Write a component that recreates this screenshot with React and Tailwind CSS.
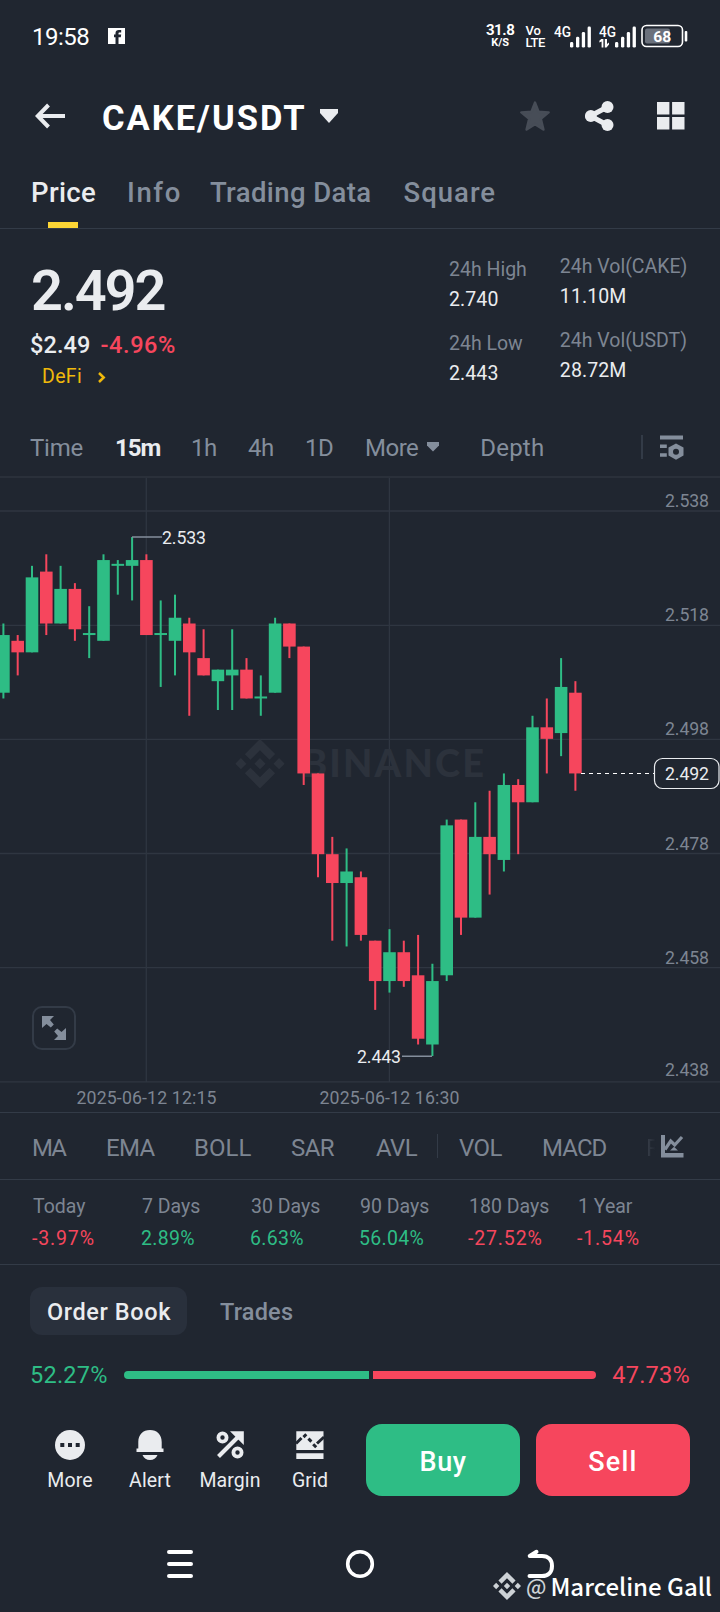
import clsx from 'clsx'

const UP = '#2ebd85'
const DOWN = '#f6465d'

// [1 = up / 0 = down, body top, body bottom, high, low], in ticks (0.001) below 2.533
const CANDLES = [
  [1, 17, 27, 15, 28], [0, 18, 20, 17, 24], [1, 7, 20, 5, 20], [0, 6, 15, 3, 17],
  [1, 9, 15, 5, 15], [0, 9, 16, 8, 18], [1, 17, 17, 12, 21], [1, 4, 18, 3, 18],
  [1, 5, 5, 4, 10], [1, 4, 5, 0, 11], [0, 4, 17, 3, 17], [1, 17, 17, 11, 26],
  [1, 14, 18, 10, 24], [0, 15, 20, 14, 31], [0, 21, 24, 16, 24], [1, 23, 25, 23, 30],
  [1, 23, 24, 16, 30], [0, 23, 28, 21, 28], [1, 28, 28, 24, 31], [1, 15, 27, 14, 27],
  [0, 15, 19, 15, 21], [0, 19, 41, 19, 43], [0, 41, 55, 41, 59], [0, 55, 60, 52, 70],
  [1, 58, 60, 54, 71], [0, 59, 69, 58, 70], [0, 70, 77, 70, 82], [1, 72, 77, 68, 79],
  [0, 72, 77, 70, 78], [0, 76, 87, 69, 88], [1, 77, 88, 74, 90], [1, 50, 76, 49, 77],
  [0, 49, 66, 49, 69], [1, 52, 66, 46, 66], [0, 52, 55, 44, 62], [1, 43, 56, 41, 58],
  [0, 43, 46, 42, 55], [1, 33, 46, 31, 46], [0, 33, 35, 28, 41], [1, 26, 34, 21, 38],
  [0, 27, 41, 25, 44],
]

const AXIS = [
  ['2.538', 511, 506.5], ['2.518', 625.3, 621], ['2.498', 739.4, 735],
  ['2.478', 853.5, 850], ['2.458', 967.7, 964], ['2.438', 1081.8, 1076],
]

const TABS = [
  { label: 'Price', cls: 'ml-[31px] tracking-[0.34px] text-[#eaecef]', active: true },
  { label: 'Info', cls: 'ml-[31px] tracking-[1.6px] text-[#848e9c]' },
  { label: 'Trading Data', cls: 'ml-[28px] tracking-[0.4px] text-[#848e9c]' },
  { label: 'Square', cls: 'ml-8 tracking-[1px] text-[#848e9c]' },
]

const STATS = [
  {
    cls: 'pt-[26px]',
    rows: [['24h High', '2.740'], ['24h Low', '2.443']],
  },
  {
    cls: 'ml-[33px] pt-[23px]',
    rows: [['24h Vol(CAKE)', '11.10M'], ['24h Vol(USDT)', '28.72M']],
  },
]

const INTERVALS = [
  ['Time', 'w-[85px] text-[#848e9c] tracking-[-0.2px]'],
  ['15m', 'w-[76px] text-[#eaecef] font-bold tracking-[-1px]'],
  ['1h', 'w-[57px] text-[#848e9c] tracking-[-0.6px]'],
  ['4h', 'w-[57px] text-[#848e9c] tracking-[-0.6px]'],
  ['1D', 'w-[60px] text-[#848e9c] tracking-[-0.4px]'],
]

const INDICATORS = [
  ['MA', 'w-[74px] tracking-[-2px]'],
  ['EMA', 'w-[88px] tracking-[-0.7px]'],
  ['BOLL', 'w-[97px] tracking-[0px]'],
  ['SAR', 'w-[85px] tracking-[-0.6px]'],
  ['AVL', 'w-[61px] tracking-[-0.6px]'],
]

const CHANGES = [
  ['Today', '-3.97%'], ['7 Days', '2.89%'], ['30 Days', '6.63%'],
  ['90 Days', '56.04%'], ['180 Days', '-27.52%'], ['1 Year', '-1.54%'],
]

function BinanceMark(props) {
  return (
    <svg viewBox="0 0 24 24" fill="currentColor" {...props}>
      <path d="M16.624 13.9202l2.7175 2.7154-7.353 7.353-7.353-7.352 2.7175-2.7164 4.6355 4.6595 4.6356-4.6595zm4.6366-4.6366L24 12l-2.7154 2.7164L18.5682 12l2.6924-2.7164zm-9.272.001l2.7163 2.6914-2.7164 2.7174v-.001L9.2721 12l2.7164-2.7154zm-9.2722-.001L5.4088 12l-2.6914 2.6924L0 12l2.7164-2.7164zM11.9885.0115l7.353 7.329-2.7174 2.7154-4.6356-4.6356-4.6355 4.6595-2.7174-2.7154 7.353-7.353z" />
    </svg>
  )
}

function Signal({ data }) {
  return (
    <svg width="37" height="24" viewBox="0 0 37 24" fill="#fff">
      <text x="0" y="13" fontSize="14" fontWeight="500" textLength="17" lengthAdjust="spacingAndGlyphs">4G</text>
      {data && (
        <path d="M2.2 15h2.2v8.5H2.6v-6L.4 18.6v-1.8zM5.8 15H8v5l2-1.4v2L7.5 23.5H5.8z" />
      )}
      <rect x="16" y="18" width="3.3" height="5.6" rx="1.4" />
      <rect x="22" y="12.8" width="3.3" height="10.8" rx="1.4" />
      <rect x="27.8" y="8" width="3.3" height="15.6" rx="1.4" />
      <rect x="33.6" y="2.5" width="3.3" height="21.1" rx="1.4" />
    </svg>
  )
}

function StatusBar() {
  return (
    <div className="flex h-[72px] items-center pl-8 pr-8 text-white">
      <span className="w-[76px] pt-0.5 text-[24px] leading-6 tracking-[-0.5px]">19:58</span>
      <svg width="17" height="16" viewBox="0 0 17 16">
        <path fill="#fff" d="M0 0h17v16H0z" />
        <path fill="#202630" d="M7.5 16V9.3H6V6.500h1.500V5.200C7.500 2.800 8.800 2 10.800 2h2.400v2.600h-1.700c-.7 0-1 .3-1 1v.9h2.700l-.4 2.800h-2.300V16z" />
      </svg>
      <div className="ml-auto flex items-center">
        <div className="flex flex-col items-center font-bold">
          <span className="text-[15px] leading-[13px] tracking-[-0.4px]">31.8</span>
          <span className="text-[11px] leading-[11px]">K/S</span>
        </div>
        <div className="ml-[11px] flex flex-col pt-px text-[13px] font-medium leading-[12px]">
          <span>Vo</span>
          <span className="tracking-[-0.4px]">LTE</span>
        </div>
        <div className="ml-[9px] flex gap-2">
          <Signal />
          <Signal data />
        </div>
        <svg className="ml-[5px]" width="47" height="24" viewBox="0 0 47 24">
          <rect x="1" y="1.5" width="40.5" height="21" rx="4.5" fill="none" stroke="#fff" strokeWidth="1.6" />
          <rect x="4" y="4.5" width="25" height="15" rx="2" fill="#6b717c" />
          <rect x="43.7" y="7" width="2.6" height="10.5" rx="1" fill="#fff" />
          <text x="12.3" y="17.5" fill="#fff" fontSize="15.5" fontWeight="700" textLength="18" lengthAdjust="spacingAndGlyphs">68</text>
        </svg>
      </div>
    </div>
  )
}

function Header() {
  return (
    <div className="flex h-[88px] items-center pl-[34px] pr-[35px] text-[#eaecef]">
      <svg width="32" height="28" viewBox="0 0 32 28" fill="none" stroke="currentColor" strokeWidth="4">
        <path d="M4 14h27" />
        <path d="M14.5 3 3.8 14l10.7 11" />
      </svg>
      <h1 className="ml-[36px] pt-1 text-[34.5px] leading-10 font-bold tracking-[2px] text-white">CAKE/USDT</h1>
      <svg className="ml-[13px]" width="18" height="14" viewBox="0 0 18 14" fill="currentColor">
        <path d="M0 0h18v4l-9 10L0 4z" />
      </svg>
      <div className="ml-auto flex items-center">
        <svg className="text-[#474d57]" width="30" height="30" viewBox="0 0 30 30" fill="currentColor" stroke="currentColor" strokeWidth="2.5" strokeLinejoin="round">
          <path d="M15 1.6l3.5 9.2 10.1.6-7.8 6.5 2.6 10.6L15 23.1l-8.4 5.4 2.6-10.6-7.8-6.5 10.1-.6z" />
        </svg>
        <svg className="ml-[35px]" width="30" height="30" viewBox="0 0 30 30" fill="currentColor">
          <path d="M22.3 6 5.5 15l16.8 9" fill="none" stroke="currentColor" strokeWidth="5" />
          <circle cx="5.8" cy="15" r="5.9" />
          <circle cx="22.5" cy="6" r="6" />
          <circle cx="22.5" cy="24" r="6" />
        </svg>
        <svg className="ml-[42px]" width="28" height="28" viewBox="0 0 28 28" fill="currentColor">
          <path d="M0 0h12.4v12.4H0zM15.1 0h12.4v12.4H15.1zM0 15.1h12.4v12.4H0zM15.1 15.1h12.4v12.4H15.1z" />
        </svg>
      </div>
    </div>
  )
}

function Tabs() {
  return (
    <nav className="flex border-b border-[#333b47] text-[27.5px] font-medium">
      {TABS.map((t) => (
        <div key={t.label} className={clsx('flex flex-col', t.cls)}>
          <span className="h-[62px] pt-[3px] leading-[59px]">{t.label}</span>
          <span className={clsx('ml-[17px] h-1.5 w-[30px]', t.active && 'bg-[#fcd535]')} />
        </div>
      ))}
    </nav>
  )
}

function Ticker() {
  return (
    <section className="flex h-[189px]">
      <div className="w-[449px] pl-[30px] pt-8">
        <div className="pl-px text-[56px] leading-[60px] font-semibold tracking-[-2.1px] text-[#eaecef]">2.492</div>
        <div className="mt-[9px] flex text-[23.5px] leading-[30px] font-medium">
          <span className="tracking-[0.1px] text-[#eaecef]">$2.49</span>
          <span className="ml-[10px] tracking-[0.6px] text-[#f6465d]">-4.96%</span>
        </div>
        <div className="mt-[5px] flex items-center pl-3 text-[19.5px] leading-6 tracking-[0.36px] text-[#f0b90b]">
          DeFi
          <svg className="ml-[16px]" width="8" height="11" viewBox="0 0 8 11" fill="none" stroke="currentColor" strokeWidth="2.5">
            <path d="M1 1l4.7 4.5L1 10" />
          </svg>
        </div>
      </div>
      {STATS.map((col, i) => (
        <div key={i} className={clsx('flex flex-col gap-[15px] text-[19.5px] leading-[29px]', col.cls)}>
          {col.rows.map(([label, value]) => (
            <div key={label}>
              <div className="text-[#7d8592]">{label}</div>
              <div className="pt-px tracking-[0.1px] text-[#eaecef]">{value}</div>
            </div>
          ))}
        </div>
      ))}
    </section>
  )
}

function Intervals() {
  return (
    <div className="flex h-[60px] items-center border-b-2 border-[#2a303a] pl-[30px] text-[24px] leading-7">
      {INTERVALS.map(([label, cls]) => (
        <span key={label} className={clsx('pt-0.5', cls)}>{label}</span>
      ))}
      <span className="pt-0.5 tracking-[-0.5px] text-[#848e9c]">More</span>
      <svg className="ml-[9px]" width="12" height="10" viewBox="0 0 12 10" fill="#848e9c">
        <path d="M0 0h12v3.5L6 9.5 0 3.5z" />
      </svg>
      <span className="ml-[41px] pt-0.5 tracking-[0.2px] text-[#848e9c]">Depth</span>
      <span className="ml-auto h-6 w-0.5 bg-[#333b47]" />
      <svg className="ml-[17px] mr-9" width="24" height="25" viewBox="0 0 24 25" fill="#848e9c">
        <path d="M0 .5h23v4H0zM0 9.5h6.8v3.5H0zM0 18.2h6.8v3.5H0z" />
        <path fillRule="evenodd" d="M16 8.5l7.5 4.1v8L16 24.7l-7.5-4.1v-8zm0 5.200a3 3 0 100 6 3 3 0 000-6z" />
      </svg>
    </div>
  )
}

function Candle({ index, data }) {
  const [up, top, bottom, high, low] = data
  const y = (u) => 537 + u * 5.767
  const cx = 3.4 + index * 14.3
  const color = up ? UP : DOWN
  const doji = top === bottom
  return (
    <g fill={color}>
      <rect x={cx - 1} y={y(high)} width="2" height={y(low) - y(high)} />
      <rect x={cx - 6.3} y={doji ? y(top) - 2 : y(top)} width="12.6" height={doji ? 2 : y(bottom) - y(top)} />
    </g>
  )
}

function Chart() {
  return (
    <div className="relative h-[634px]">
      <svg className="block" width="720" height="634" viewBox="0 478 720 634" fontSize="17.7">
        <g stroke="#2f3641" strokeWidth="1.3">
          {AXIS.map(([p, y]) => <path key={p} d={`M0 ${y}H720`} />)}
          <path d="M146.3 478V1082M389.4 478V1082" />
        </g>
        <BinanceMark x="235.3" y="739" width="49.4" height="49.4" color="#2c323c" />
        <text x="302" y="777" fill="#2c323c" fontSize="38" fontWeight="900" fontFamily="Lato" textLength="182">BINANCE</text>
        {CANDLES.map((c, i) => <Candle key={i} index={i} data={c} />)}

        <g fill="#7d8592">
          {AXIS.map(([p, , ty]) => <text key={p} x="665" y={ty} textLength="44">{p}</text>)}
          <text x="76.5" y="1104" textLength="140">2025-06-12 12:15</text>
          <text x="319.5" y="1104" textLength="140">2025-06-12 16:30</text>
        </g>

        <path d="M132 537h30M402 1056.2h30" stroke="#848e9c" strokeWidth="1.6" />
        <g fill="#eaecef">
          <text x="162" y="544" textLength="44">2.533</text>
          <text x="357" y="1063" textLength="44">2.443</text>
        </g>

        {/* last price */}
        <path d="M581 773.5H655" stroke="#fff" strokeWidth="1.2" strokeDasharray="4 4" />
        <rect x="654.5" y="758.5" width="64.5" height="30" rx="8" fill="#202630" stroke="#eaecef" strokeWidth="1.2" />
        <text x="665" y="780" fill="#eaecef" textLength="44">2.492</text>
      </svg>
      <button className="absolute left-8 top-[528px] flex size-11 items-center justify-center rounded-[10px] border-2 border-[#333b47] bg-[#202630]">
        <svg width="24" height="24" viewBox="0 0 24 24" fill="#848e9c">
          <path d="M0 0h12L8 4l3.8 4.5-3 3L4.5 8 0 12z" />
          <path d="M24 24H12l4-4-3.8-4.5 3-3L19.5 16l4.500-4z" />
        </svg>
      </button>
    </div>
  )
}

function Indicators() {
  return (
    <div className="flex h-[68px] items-center border-y border-[#333b47] pl-8 text-[24px] leading-7 text-[#7d8592]">
      {INDICATORS.map(([label, cls]) => (
        <span key={label} className={clsx('pt-1', cls)}>{label}</span>
      ))}
      <span className="h-6 w-px bg-[#333b47]" />
      <span className="ml-[21px] w-[83px] pt-1 tracking-[-0.6px]">VOL</span>
      <span className="w-[104px] pt-1 tracking-[-0.9px]">MACD</span>
      {/* next indicator fades out under the icon */}
      <span className="w-4 bg-linear-to-r from-[#3a414c] to-transparent to-60% bg-clip-text pt-1 text-transparent">R</span>
      <svg className="-ml-px" width="23" height="23" viewBox="0 0 23 23" fill="#848e9c">
        <path d="M0 0h4v18h18.5v4.5H0z" />
        <path d="M4 14.5 9.7 6l4 4L21 2" fill="none" stroke="#848e9c" strokeWidth="3.2" />
        <path d="M9 15.5l4-3.7 4 3.7z" />
      </svg>
    </div>
  )
}

function Changes() {
  return (
    <div className="grid h-[85px] grid-cols-[repeat(6,109px)] border-b border-[#333b47] pl-8 pt-[11px] text-[19.5px] leading-8">
      {CHANGES.map(([label, value]) => (
        <div key={label} className="whitespace-nowrap">
          <div className="pl-px text-[#7d8592]">{label}</div>
          <div
            className={clsx(
              value.startsWith('-') ? 'tracking-[0.85px] text-[#f6465d]' : 'tracking-[0.3px] text-[#2ebd85]',
            )}
          >
            {value}
          </div>
        </div>
      ))}
    </div>
  )
}

function OrderBook() {
  return (
    <section className="px-[30px] pt-[22px]">
      <div className="flex h-12 text-[23.5px] leading-[50px] font-medium">
        <span className="w-[157px] rounded-xl bg-[#29303c] pl-[17px] tracking-[0.6px] text-[#eaecef]">Order Book</span>
        <span className="ml-[33px] tracking-[0.2px] text-[#848e9c]">Trades</span>
      </div>
      <div className="mt-6 flex h-8 items-center text-[23.5px]">
        <span className="w-[94px] pt-0.5 tracking-[0.25px] text-[#2ebd85]">52.27%</span>
        <span className="h-2 w-[245px] rounded-l-full bg-[#2ebd85]" />
        <span className="ml-1 h-2 w-[223px] rounded-r-full bg-[#f6465d]" />
        <span className="ml-auto pt-0.5 tracking-[0.25px] text-[#f6465d]">47.73%</span>
      </div>
    </section>
  )
}

function Action({ label, children }) {
  return (
    <div className="flex w-20 flex-col items-center gap-[9px] pt-1.5">
      <svg width="30" height="30" viewBox="0 0 30 30" fill="currentColor">{children}</svg>
      <span className="text-[19.5px] leading-6 tracking-[0.1px]">{label}</span>
    </div>
  )
}

function BottomBar() {
  return (
    <div className="mt-[33px] flex h-[72px] pl-[30px] text-[#eaecef]">
      <Action label="More">
        <circle cx="15" cy="15" r="15" />
        <path fill="#202630" d="M5.3 13h4v4h-4zM13 13h4v4h-4zM20.7 13h4v4h-4z" />
      </Action>
      <Action label="Alert">
        <path d="M1.5 22v-3.500h1.800V12C3.300 4.500 8 0 15 0s11.700 4.500 11.700 12v6.500h1.800V22zM7.500 25h15c-1.500 3.300-4 5-7.500 5s-6-1.700-7.500-5z" />
      </Action>
      <Action label="Margin">
        <path fillRule="evenodd" d="M7.500 1.500a6 6 0 110 12 6 6 0 010-12zm0 3.800a2.200 2.200 0 100 4.400 2.200 2.200 0 000-4.400zM22.500 16.500a6 6 0 110 12 6 6 0 010-12zm0 3.800a2.200 2.200 0 100 4.400 2.200 2.200 0 000-4.400z" />
        <path d="M3.500 26.500 24 6" stroke="currentColor" strokeWidth="4" />
        <path d="M15 1.200h13.800V15z" />
      </Action>
      <Action label="Grid">
        <path d="M1.300 1.200h27.200V20H1.300zM1.300 23.300h27.200V29H1.300z" />
        <path
          d="M1 13.500 6.500 8M8.500 7.100 11.300 4.300M13.400 8.600l3 3M18.200 14.200l3 3M22 13.500 29 7"
          stroke="#202630"
          strokeWidth="3"
        />
      </Action>
      <button className="ml-4 w-[154px] rounded-2xl bg-[#2ebd85] pt-1 text-[27px] font-medium tracking-[0.5px] text-white">Buy</button>
      <button className="ml-4 w-[154px] rounded-2xl bg-[#f6465d] pt-1 text-[27px] font-medium tracking-[1.2px] text-white">Sell</button>
    </div>
  )
}

function SystemNav() {
  return (
    <div className="flex h-[116px] justify-center pt-[53px]">
      <div className="flex w-[180px] justify-center">
        <svg width="30" height="30" viewBox="0 0 30 30" stroke="#fff" strokeWidth="4" strokeLinecap="round">
          <path d="M4 3h22M4 15h22M4 27h22" />
        </svg>
      </div>
      <div className="flex w-[180px] justify-center">
        <svg width="30" height="30" viewBox="0 0 30 30">
          <circle cx="15" cy="15" r="12.3" fill="none" stroke="#fff" strokeWidth="3.6" />
        </svg>
      </div>
      <div className="flex w-[180px] justify-center">
        <svg width="30" height="30" viewBox="0 0 30 30" fill="none" stroke="#fff" strokeWidth="4" strokeLinecap="round" strokeLinejoin="round">
          <path d="M4.500 27H17c6.500 0 10-4 10-10S23.500 7 17 7H4.700l6.800-4.200" />
        </svg>
      </div>
    </div>
  )
}

export default function App() {
  return (
    <div className="relative h-[1612px] w-[720px] overflow-hidden bg-[#202630] font-['Roboto',sans-serif]">
      <StatusBar />
      <Header />
      <Tabs />
      <Ticker />
      <Intervals />
      <Chart />
      <Indicators />
      <Changes />
      <OrderBook />
      <BottomBar />
      <SystemNav />

      {/* author credit */}
      <div className="absolute right-2 top-[1569px] flex items-center font-['Noto_Sans_CJK_SC',sans-serif] text-[24px] leading-[34px] font-medium text-white">
        <BinanceMark width="28" height="28" color="#cdd2d6" />
        <span className="ml-[5px] text-[21px] text-[#cdd2d6]">@</span>
        <span className="ml-1">Marceline Gall</span>
      </div>
    </div>
  )
}
